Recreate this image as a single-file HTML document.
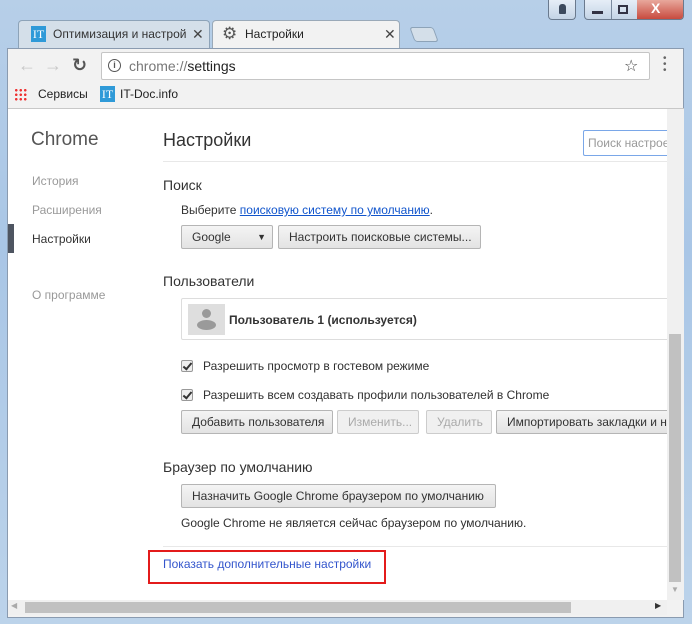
<!DOCTYPE html>
<html><head><meta charset="utf-8"><style>
*{box-sizing:border-box;margin:0;padding:0}
body{width:692px;height:624px;overflow:hidden;position:relative;font-family:"Liberation Sans","DejaVu Sans",sans-serif;font-size:12px;color:#303030;background:linear-gradient(180deg,#b7cfe8 0%,#a9c6e6 40%,#bcd3ea 100%)}
.abs{position:absolute}
.btn{position:absolute;height:24px;border:1px solid #b5b5b5;border-radius:2px;background:linear-gradient(#f4f4f4,#e3e3e3);font-size:12px;color:#333;line-height:22px;padding:0 10px;white-space:nowrap;overflow:hidden}
.dis{color:#aaa;border-color:#ccc;background:#f0f0f0}
.cb{position:absolute;width:12px;height:12px;border:1px solid #999;border-radius:2px;background:#eee}
.cb::after{content:"";position:absolute;left:3px;top:0px;width:3px;height:7px;border:solid #333;border-width:0 2px 2px 0;transform:rotate(40deg)}
</style></head><body>
<div class="abs" style="left:548px;top:0;width:28px;height:20px;border:1px solid #6a7a8e;border-top:0;border-radius:0 0 4px 4px;background:linear-gradient(#e6eef7,#c4d4e6)"></div>
<div class="abs" style="left:559px;top:4px;width:7px;height:10px;background:#3c4a5e;border-radius:3px 3px 1px 1px"></div>
<div class="abs" style="left:584px;top:0;width:100px;height:20px;border:1px solid #6a7a8e;border-top:0;border-radius:0 0 4px 4px;background:linear-gradient(#e6eef7,#c4d4e6);overflow:hidden">
 <div class="abs" style="left:26px;top:0;width:1px;height:20px;background:#7a8a9e"></div>
 <div class="abs" style="left:52px;top:0;width:48px;height:20px;background:linear-gradient(#e8a89c,#c6463a)"></div>
 <div class="abs" style="left:7px;top:11px;width:11px;height:3px;background:#334;"></div>
 <div class="abs" style="left:33px;top:5px;width:10px;height:9px;border:2px solid #334"></div>
 <div class="abs" style="left:66px;top:0;color:#fff;font-weight:bold;font-size:14px">X</div>
</div>
<div class="abs" style="left:18px;top:20px;width:192px;height:28px;background:#d4dfe9;border:1px solid #8da3b8;border-bottom:0;border-radius:4px 4px 0 0"></div>
<div class="abs" style="left:31px;top:26px;width:15px;height:16px;background:#2f9ad8;color:#fff;font-family:'Liberation Serif',serif;font-size:12px;line-height:16px;text-align:center">IT</div>
<div class="abs" style="left:53px;top:27px;font-size:12px;color:#333;width:140px;overflow:hidden;white-space:nowrap">Оптимизация и настрой</div>
<div class="abs" style="left:192px;top:26px;font-size:14px;color:#444">✕</div>
<div class="abs" style="left:212px;top:20px;width:188px;height:29px;background:#f2f2f2;border:1px solid #9aa9b8;border-bottom:0;border-radius:4px 4px 0 0"></div>
<div class="abs" style="left:222px;top:24px;font-size:17px;color:#555">⚙</div>
<div class="abs" style="left:245px;top:27px;font-size:12px;color:#222">Настройки</div>
<div class="abs" style="left:384px;top:26px;font-size:14px;color:#444">✕</div>
<div class="abs" style="left:412px;top:27px;width:24px;height:15px;background:#d4dfe9;border:1px solid #8da3b8;border-radius:3px;transform:skewX(20deg)"></div>
<div class="abs" style="left:7px;top:48px;width:677px;height:570px;background:#f2f2f2;border:1px solid #8a9bb0"></div>
<div class="abs" style="left:18px;top:55px;font-size:18px;color:#c8c8c8">←</div>
<div class="abs" style="left:44px;top:55px;font-size:18px;color:#c8c8c8">→</div>
<div class="abs" style="left:72px;top:55px;font-size:18px;color:#555;font-weight:bold">↻</div>
<div class="abs" style="left:101px;top:52px;width:549px;height:28px;background:#fff;border:1px solid #c5c5c5;border-radius:2px"></div>
<div class="abs" style="left:108px;top:59px;width:13px;height:13px;border:1.5px solid #555;border-radius:50%;font-size:9px;line-height:10px;text-align:center;font-weight:bold;color:#555">i</div>
<div class="abs" style="left:129px;top:58px;font-size:14px;color:#777">chrome://<span style="color:#222">settings</span></div>
<div class="abs" style="left:624px;top:56px;font-size:16px;color:#444">☆</div>
<div class="abs" style="left:663px;top:56px;width:3px;line-height:6px;font-size:10px;color:#666">•<br>•<br>•</div>
<div class="abs" style="left:14px;top:88px;width:13px;height:13px;background:radial-gradient(circle,#e33 40%,transparent 45%) 0 0/4.5px 4.5px"></div>
<div class="abs" style="left:38px;top:87px;font-size:12px;color:#222">Сервисы</div>
<div class="abs" style="left:100px;top:86px;width:15px;height:16px;background:#2f9ad8;color:#fff;font-family:'Liberation Serif',serif;font-size:12px;line-height:16px;text-align:center">IT</div>
<div class="abs" style="left:120px;top:87px;font-size:12px;color:#222">IT-Doc.info</div>
<div class="abs" style="left:8px;top:108px;width:676px;height:492px;background:#fff;border-top:1px solid #c8c8c8"></div>
<div class="abs" style="left:31px;top:129px;font-size:19px;color:#555">Chrome</div>
<div class="abs" style="left:32px;top:174px;color:#999">История</div>
<div class="abs" style="left:32px;top:203px;color:#999">Расширения</div>
<div class="abs" style="left:8px;top:224px;width:6px;height:29px;background:#4e5561"></div>
<div class="abs" style="left:32px;top:232px;color:#333">Настройки</div>
<div class="abs" style="left:32px;top:288px;color:#999">О программе</div>
<div class="abs" style="left:163px;top:130px;font-size:18px;color:#333">Настройки</div>
<div class="abs" style="left:583px;top:130px;width:84px;height:26px;border:1px solid #7aa7e8;border-right:0;border-radius:2px 0 0 2px;font-size:12px;color:#999;padding:5px 4px;white-space:nowrap;overflow:hidden">Поиск настроек</div>
<div class="abs" style="left:163px;top:161px;width:504px;height:1px;background:#e8e8e8"></div>
<div class="abs" style="left:163px;top:177px;font-size:14px;color:#333">Поиск</div>
<div class="abs" style="left:181px;top:203px;color:#333">Выберите <span style="color:#15c;text-decoration:underline">поисковую систему по умолчанию</span>.</div>
<div class="btn" style="left:181px;top:225px;width:92px">Google<span style="position:absolute;right:6px;top:0;font-size:9px">▼</span></div>
<div class="btn" style="left:278px;top:225px;width:203px">Настроить поисковые системы...</div>
<div class="abs" style="left:163px;top:273px;font-size:14px;color:#333">Пользователи</div>
<div class="abs" style="left:181px;top:298px;width:490px;height:42px;border:1px solid #ddd;border-radius:2px"></div>
<div class="abs" style="left:188px;top:304px;width:37px;height:31px;background:#dedede;overflow:hidden">
 <div class="abs" style="left:14px;top:5px;width:9px;height:9px;border-radius:50%;background:#9a9a9a"></div>
 <div class="abs" style="left:9px;top:16px;width:19px;height:10px;border-radius:50%;background:#9a9a9a"></div>
</div>
<div class="abs" style="left:229px;top:313px;font-weight:bold;color:#333">Пользователь 1 (используется)</div>
<div class="cb" style="left:181px;top:360px"></div>
<div class="abs" style="left:203px;top:359px">Разрешить просмотр в гостевом режиме</div>
<div class="cb" style="left:181px;top:389px"></div>
<div class="abs" style="left:203px;top:388px">Разрешить всем создавать профили пользователей в Chrome</div>
<div class="btn" style="left:181px;top:410px;width:152px">Добавить пользователя</div>
<div class="btn dis" style="left:337px;top:410px;width:82px">Изменить...</div>
<div class="btn dis" style="left:426px;top:410px;width:66px;text-align:center">Удалить</div>
<div class="btn" style="left:496px;top:410px;width:175px">Импортировать закладки и настройки</div>
<div class="abs" style="left:163px;top:459px;font-size:14px;color:#333">Браузер по умолчанию</div>
<div class="btn" style="left:181px;top:484px;width:315px">Назначить Google Chrome браузером по умолчанию</div>
<div class="abs" style="left:181px;top:516px">Google Chrome не является сейчас браузером по умолчанию.</div>
<div class="abs" style="left:163px;top:546px;width:504px;height:1px;background:#e8e8e8"></div>
<div class="abs" style="left:148px;top:550px;width:238px;height:34px;border:2px solid #e31b1b"></div>
<div class="abs" style="left:163px;top:557px;color:#3355cc">Показать дополнительные настройки</div>
<div class="abs" style="left:667px;top:109px;width:17px;height:491px;background:#f0f0f0"></div>
<div class="abs" style="left:669px;top:334px;width:12px;height:248px;background:#c1c1c1"></div>
<div class="abs" style="left:671px;top:585px;font-size:8px;color:#aaa">▼</div>
<div class="abs" style="left:8px;top:600px;width:659px;height:15px;background:#f0f0f0"></div>
<div class="abs" style="left:25px;top:602px;width:546px;height:11px;background:#c1c1c1"></div>
<div class="abs" style="left:11px;top:601px;font-size:8px;color:#aaa">◀</div>
<div class="abs" style="left:655px;top:601px;font-size:8px;color:#333">▶</div>
</body></html>
